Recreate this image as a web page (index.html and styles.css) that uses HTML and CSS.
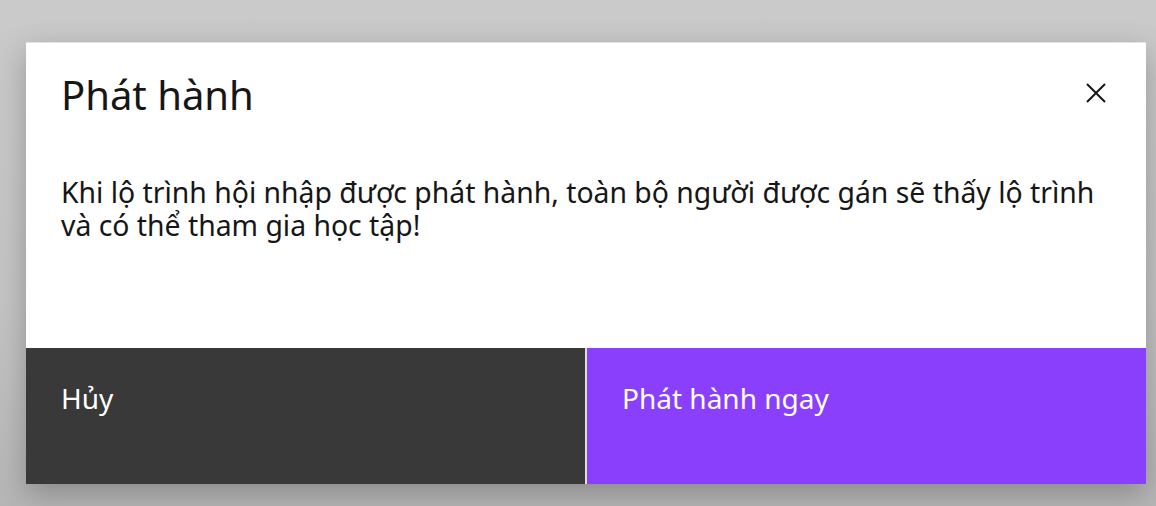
FILE: index.html
```html
<!DOCTYPE html>
<html lang="vi">
<head>
<meta charset="utf-8">
<title>Phát hành</title>
<link rel="stylesheet" href="styles.css">
</head>
<body>
<div class="page">
  <div class="modal" role="dialog" aria-labelledby="modal-title">
    <div class="modal-header">
      <h2 id="modal-title" class="modal-title">Phát hành</h2>
      <button class="modal-close" aria-label="Đóng">
        <svg width="20" height="20" viewBox="0 0 20 20" aria-hidden="true">
          <path d="M1 1 L19 19 M19 1 L1 19" stroke="#161616" stroke-width="2" fill="none"/>
        </svg>
      </button>
    </div>
    <div class="modal-body">
      <p class="modal-text">Khi lộ trình hội nhập được phát hành, toàn bộ người được gán sẽ thấy lộ trình và có thể tham gia học tập!</p>
    </div>
    <div class="modal-footer">
      <button class="btn btn-secondary">Hủy</button>
      <button class="btn btn-primary">Phát hành ngay</button>
    </div>
  </div>
</div>
</body>
</html>
```
FILE: styles.css
```css
html, body {
  margin: 0;
  padding: 0;
}
body {
  font-family: "Noto Sans", "Open Sans", sans-serif;
  color: #161616;
}
.page {
  width: 1156px;
  height: 506px;
  box-sizing: border-box;
  padding: 42px 0 0 26px;
  background: linear-gradient(180deg, #cacaca 0%, #c4c4c4 60%, #b6b6b6 100%);
  overflow: hidden;
}
.modal {
  width: 1120px;
  height: 442px;
  background: #ffffff;
  border-top: 1px solid #e4e4e4;
  box-sizing: border-box;
  display: flex;
  flex-direction: column;
  box-shadow: 0 10px 28px rgba(0, 0, 0, 0.25);
}
.modal-header {
  display: flex;
  justify-content: space-between;
  align-items: flex-start;
  padding: 26px 40px 0 35px;
}
.modal-title {
  margin: 0;
  font-size: 40px;
  font-weight: 400;
  line-height: 52px;
}
.modal-close {
  margin-top: 14px;
  padding: 0;
  border: 0;
  background: transparent;
  width: 20px;
  height: 20px;
  display: flex;
}
.modal-body {
  flex: 1;
  padding: 55px 35px 0 35px;
}
.modal-text {
  margin: 0;
  font-size: 28.35px;
  line-height: 33px;
}
.modal-footer {
  display: grid;
  grid-template-columns: 1fr 1fr;
  gap: 2px;
  height: 136px;
  background: #e0e0e0;
}
.btn {
  border: 0;
  margin: 0;
  font-family: inherit;
  font-size: 28px;
  line-height: 36px;
  color: #ffffff;
  text-align: left;
  padding: 32px 35px 0 35px;
  display: flex;
  align-items: flex-start;
}
.btn-secondary {
  background: #393939;
}
.btn-primary {
  background: #8a3ffc;
}
```
